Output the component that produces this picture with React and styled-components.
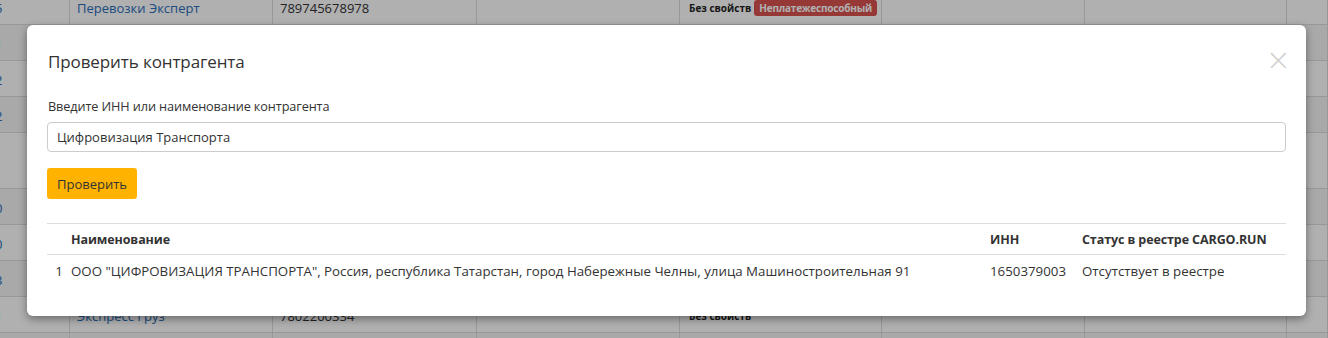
import React from "react";
import styled, { createGlobalStyle } from "styled-components";

const GlobalStyle = createGlobalStyle`
  html, body {
    margin: 0;
    padding: 0;
    background: #fff;
    overflow: hidden;
  }
  body {
    font-family: "Open Sans", "Noto Sans", sans-serif;
    color: #333;
  }
`;

const Page = styled.div`
  position: relative;
  width: 1328px;
  height: 338px;
  overflow: hidden;
`;

const BgTable = styled.div`
  margin-top: -11px;
  display: grid;
  grid-template-columns: 70px 203px 204px 203px 202px 203px 202px 1fr;
  font-size: 13px;
`;

const BgCell = styled.div`
  height: ${(p) => (p.$tall ? 56 : 36)}px;
  box-sizing: border-box;
  border-right: 1px solid #ddd;
  border-bottom: 1px solid #ddd;
  background: ${(p) => (p.$stripe ? "#f5f5f5" : "#fff")};
  display: flex;
  align-items: center;
  padding: 3px 0 0 7px;
  white-space: nowrap;
  overflow: hidden;
`;

const Link = styled.span`
  color: #2a6ebb;
  font-size: 13px;
`;

const Cut = styled(Link)`
  margin-left: -12px;
`;

const Muted = styled.span`
  color: #333;
  font-size: 13px;
`;

const Props = styled.span`
  font-size: 10px;
  font-weight: 700;
  color: #222;
  display: flex;
  align-items: center;
  gap: 3px;
  margin-left: 2px;
`;

const Badge = styled.span`
  background: #d9534f;
  color: #fff;
  font-size: 10px;
  font-weight: 700;
  padding: 1px 5px;
  border-radius: 3px;
  letter-spacing: -0.2px;
`;

const Backdrop = styled.div`
  position: absolute;
  inset: 0;
  background: rgba(0, 0, 0, 0.31);
`;

const Modal = styled.div`
  position: absolute;
  left: 27px;
  top: 25px;
  width: 1279px;
  height: 291px;
  box-sizing: border-box;
  background: #fff;
  border-radius: 6px;
  box-shadow: 0 3px 9px rgba(0, 0, 0, 0.4);
  font-family: "Open Sans", "Noto Sans", sans-serif;
`;

const Header = styled.div`
  display: flex;
  align-items: center;
  justify-content: space-between;
  padding: 24px 15px 0 21px;
  height: 24px;
`;

const Title = styled.h4`
  margin: 0;
  font-size: 17px;
  font-weight: 400;
  color: #333;
  letter-spacing: -0.1px;
`;

const Close = styled.span`
  color: #d0d0d0;
  font-size: 30px;
  line-height: 1;
  font-family: "DejaVu Sans", sans-serif;
  font-weight: 300;
  margin-top: -2px;
`;

const Body = styled.div`
  padding: 24px 20px 0 20px;
`;

const Label = styled.label`
  display: block;
  font-size: 12.7px;
  color: #333;
  padding-left: 1px;
  margin-bottom: 7px;
  letter-spacing: -0.1px;
`;

const Input = styled.div`
  height: 30px;
  box-sizing: border-box;
  border: 1px solid #ccc;
  border-radius: 4px;
  display: flex;
  align-items: center;
  padding-left: 9px;
  font-size: 13px;
  color: #333;
`;

const Button = styled.button`
  margin-top: 16px;
  height: 31px;
  padding: 0 10px;
  background: #ffb300;
  border: none;
  border-radius: 3px;
  font-family: inherit;
  font-size: 13px;
  color: #333;
`;

const Table = styled.div`
  margin-top: 24px;
  display: grid;
  grid-template-columns: 24px 919px 92px 1fr;
  border-top: 1px solid #ddd;
  color: #333;
`;

const Th = styled.div`
  height: 30px;
  display: flex;
  align-items: center;
  font-size: 12.5px;
  font-weight: 700;
  border-bottom: 1px solid #ddd;
  white-space: nowrap;
  letter-spacing: -0.1px;
`;

const Td = styled.div`
  height: 31px;
  display: flex;
  align-items: center;
  justify-content: ${(p) => (p.$center ? "center" : "flex-start")};
  font-size: 13.3px;
  white-space: nowrap;
`;

const bgRows = [
  { c1: "5", c2: "Перевозки Эксперт", c3: "789745678978", props: true, badge: true },
  { c1: "1", stripe: true },
  { c1: "2" },
  { c1: "2", stripe: true },
  { tall: true },
  { c1: "0", stripe: true },
  { c1: "0" },
  { c1: "3", stripe: true },
  { c1: "1", c2: "Экспресс Груз", c3: "7802200334", props: true },
  { c1: "", stripe: true },
];

const App = () => {
  return (
    <Page>
      <GlobalStyle />
      <BgTable>
        {bgRows.map((r, i) => (
          <React.Fragment key={i}>
            <BgCell $tall={r.tall} $stripe={r.stripe}>
              {r.c1 && <Cut>{r.c1}</Cut>}
            </BgCell>
            <BgCell $tall={r.tall} $stripe={r.stripe}>
              {r.c2 && <Link>{r.c2}</Link>}
            </BgCell>
            <BgCell $tall={r.tall} $stripe={r.stripe}>
              {r.c3 && <Muted>{r.c3}</Muted>}
            </BgCell>
            <BgCell $tall={r.tall} $stripe={r.stripe} />
            <BgCell $tall={r.tall} $stripe={r.stripe}>
              {r.props && (
                <Props>
                  Без свойств
                  {r.badge && <Badge>Неплатежеспособный</Badge>}
                </Props>
              )}
            </BgCell>
            <BgCell $tall={r.tall} $stripe={r.stripe} />
            <BgCell $tall={r.tall} $stripe={r.stripe} />
            <BgCell $tall={r.tall} $stripe={r.stripe} />
          </React.Fragment>
        ))}
      </BgTable>
      <Backdrop />
      <Modal>
        <Header>
          <Title>Проверить контрагента</Title>
          <Close>×</Close>
        </Header>
        <Body>
          <Label>Введите ИНН или наименование контрагента</Label>
          <Input>Цифровизация Транспорта</Input>
          <Button>Проверить</Button>
          <Table>
            <Th />
            <Th>Наименование</Th>
            <Th>ИНН</Th>
            <Th>Статус в реестре CARGO.RUN</Th>
            <Td $center>1</Td>
            <Td>
              ООО "ЦИФРОВИЗАЦИЯ ТРАНСПОРТА", Россия, республика Татарстан, город
              Набережные Челны, улица Машиностроительная 91
            </Td>
            <Td>1650379003</Td>
            <Td>Отсутствует в реестре</Td>
          </Table>
        </Body>
      </Modal>
    </Page>
  );
};

export default App;
